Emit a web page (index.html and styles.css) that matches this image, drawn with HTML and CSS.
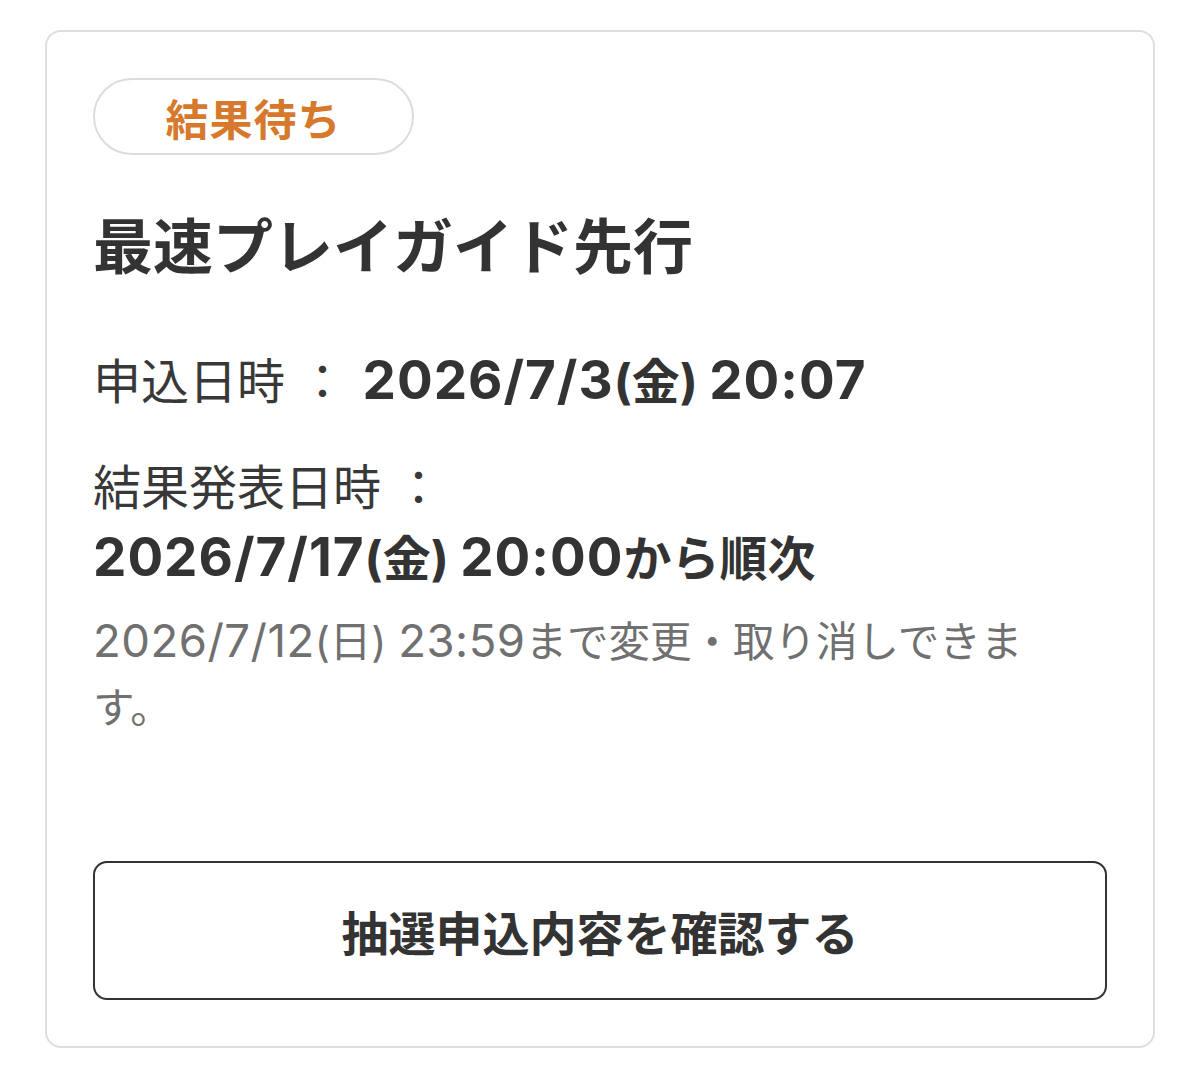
FILE: index.html
```html
<!DOCTYPE html>
<html lang="ja">
<head>
    <meta charset="UTF-8">
    <meta name="viewport" content="width=device-width, initial-scale=1.0">
    <title>抽選申込</title>
    <link rel="stylesheet" href="styles.css">
</head>
<body>
    <div class="entry-card">
        <div class="status-badge">結果待ち</div>

        <h2 class="entry-title">最速プレイガイド先行</h2>

        <div class="info-row">
            <span class="info-label">申込日時 ：</span>
            <span class="info-value"><span class="num">2026/7/3</span>(金) <span class="num">20:07</span></span>
        </div>

        <div class="info-block">
            <div class="info-label">結果発表日時 ：</div>
            <div class="info-value"><span class="num">2026/7/17</span>(金) <span class="num">20:00</span>から順次</div>
        </div>

        <p class="note"><span class="num">2026/7/12</span>(日) <span class="num">23:59</span><span>まで変更・取り消しできま</span><span>す。</span></p>

        <a class="confirm-button" href="#">抽選申込内容を確認する</a>
    </div>
</body>
</html>
```

FILE: styles.css
```css
body {
    margin: 0;
    padding: 30px 45px;
    background-color: #fff;
    font-family: Inter, "Noto Sans CJK JP", sans-serif;
    color: #333;
}

.entry-card {
    border: 2px solid #dedede;
    border-radius: 16px;
    padding: 46px;
}

.status-badge {
    width: 317px;
    height: 73px;
    border: 2px solid #dcdcdc;
    border-radius: 40px;
    display: flex;
    align-items: center;
    justify-content: center;
    color: #d6792c;
    font-size: 43px;
    font-weight: bold;
    letter-spacing: 1px;
}

.entry-title {
    margin: 51px 0 0;
    font-size: 60px;
    line-height: 82px;
    font-weight: bold;
    color: #333;
}

.info-row {
    margin-top: 58px;
    display: flex;
    align-items: baseline;
    line-height: 70px;
}

.info-label {
    font-size: 48px;
    color: #383838;
    line-height: 70px;
}

.info-row .info-label {
    margin-right: 16px;
}

.info-value {
    font-size: 48px;
    font-weight: bold;
    color: #333;
    line-height: 72px;
}

.info-value .num {
    font-size: 53px;
    line-height: 1;
    letter-spacing: 1px;
}

.info-block {
    margin-top: 35px;
}

.note {
    margin: 14px 0 0;
    padding-right: 40px;
    font-size: 41.5px;
    line-height: 66px;
    color: #707070;
}

.note .num {
    font-size: 45.5px;
    line-height: 1;
    letter-spacing: 0.5px;
}

.confirm-button {
    display: flex;
    align-items: center;
    justify-content: center;
    margin-top: 120px;
    height: 135px;
    border: 2px solid #333;
    border-radius: 14px;
    color: #333;
    text-decoration: none;
    font-size: 47px;
    font-weight: bold;
}
```
